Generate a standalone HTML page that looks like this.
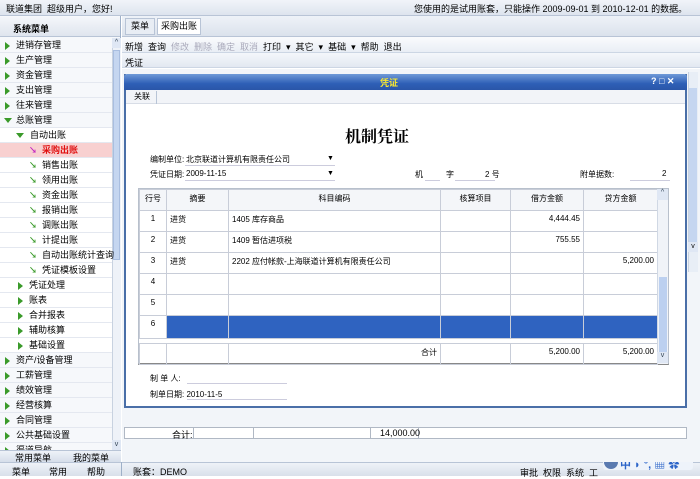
<!DOCTYPE html>
<html><head><meta charset="utf-8"><style>
*{margin:0;padding:0;box-sizing:border-box}
body{width:700px;height:476px;overflow:hidden;background:#fff;font-family:"Liberation Sans","Noto Sans CJK SC",sans-serif;font-size:9px;color:#000;position:relative}
.a{position:absolute;white-space:nowrap}
.mi{position:absolute;left:0;width:112px;height:15px;line-height:15px;border-bottom:1px solid #e4e8f0;background:#f6f8fb}
.tri{position:absolute;width:0;height:0;border-top:4px solid transparent;border-bottom:4px solid transparent;border-left:5px solid #3a9a2a;top:4px}
.dn{position:absolute;width:0;height:0;border-left:4px solid transparent;border-right:4px solid transparent;border-top:5px solid #3a9a2a;top:5px}
.ar{position:absolute;width:7px;height:7px;top:4px;color:#3a9a2a;font-size:8px;line-height:7px;font-weight:bold}
table{border-collapse:collapse;table-layout:fixed}
td{border:1px solid #c8cdd8;font-size:8px;padding:0 3px;height:21px;vertical-align:top;padding-top:3px;overflow:hidden;white-space:nowrap}
</style></head><body>
<div class="a" style="left:0;top:0;width:700px;height:16px;background:linear-gradient(#f1f4f9,#dde4ee);border-bottom:1px solid #b8c4d6"></div>
<div class="a" style="left:6px;top:2px;font-size:9px">联道集团&nbsp; 超级用户，您好!</div>
<div class="a" style="left:414px;top:2px;font-size:9px">您使用的是试用账套，只能操作 2009-09-01 到 2010-12-01 的数据。</div>
<div class="a" style="left:0;top:16px;width:121px;height:446px;background:#f6f8fb;border-right:1px solid #9eb0c8"></div>
<div class="a" style="left:0;top:17px;width:120px;height:20px;background:linear-gradient(#f4f6fa,#dfe5ee);border-bottom:1px solid #b8c4d6"></div>
<div class="a" style="left:13px;top:22px;font-size:9px;font-weight:bold">系统菜单</div>
<div class="a" style="left:112px;top:38px;width:9px;height:412px;background:#eef2f8;border-left:1px solid #c8d2e0"></div>
<div class="a" style="left:112px;top:38px;width:9px;height:10px;background:#dfe7f4;font-size:7px;text-align:center;line-height:10px;color:#345">^</div>
<div class="a" style="left:113px;top:50px;width:7px;height:210px;background:#c5d6f0;border:1px solid #a9bee0"></div>
<div class="a" style="left:112px;top:440px;width:9px;height:10px;background:#dfe7f4;font-size:7px;text-align:center;line-height:10px;color:#345">v</div>
<div id="menu"></div>
<div class="a" style="left:0;top:450px;width:121px;height:12px;background:linear-gradient(#eef2f8,#d6deea);border-top:1px solid #b8c4d6"></div>
<div class="a" style="left:15px;top:451px;font-size:9px">常用菜单</div>
<div class="a" style="left:73px;top:451px;font-size:9px">我的菜单</div>
<div class="a" style="left:0;top:462px;width:700px;height:14px;background:linear-gradient(#eef2f8,#d9e0ea);border-top:1px solid #b8c4d6"></div>
<div class="a" style="left:121px;top:462px;width:1px;height:14px;background:#9eb0c8"></div>
<div class="a" style="left:12px;top:465px">菜单</div>
<div class="a" style="left:49px;top:465px">常用</div>
<div class="a" style="left:87px;top:465px">帮助</div>
<div class="a" style="left:133px;top:465px">账套：DEMO</div>
<div class="a" style="left:520px;top:466px">审批&nbsp;&nbsp;权限&nbsp;&nbsp;系统&nbsp;&nbsp;工</div>
<div class="a" style="left:603px;top:456px;width:90px;height:14px;background:#eef3fa;border-radius:3px"></div>
<div class="a" style="left:604px;top:455px;width:14px;height:14px;border-radius:50%;background:#5a7ab0"></div>
<div class="a" style="left:620px;top:456px;color:#2c64c8;font-size:11px;font-weight:bold">中 ◗ °, ▦ ✿</div>
<div class="a" style="left:122px;top:16px;width:578px;height:21px;background:linear-gradient(#eef2f8,#dbe2ec);border-bottom:1px solid #b8c4d6"></div>
<div class="a" style="left:125px;top:18px;width:30px;height:17px;background:#e8edf4;border:1px solid #b8c4d6;text-align:center;line-height:15px;font-size:9px">菜单</div>
<div class="a" style="left:157px;top:18px;width:44px;height:17px;background:#fff;border:1px solid #b8c4d6;text-align:center;line-height:15px;font-size:9px">采购出账</div>
<div class="a" style="left:122px;top:37px;width:578px;height:16px;background:linear-gradient(#fafbfd,#e9eef5);border-bottom:1px solid #ccd6e4"></div>
<div class="a" style="left:125px;top:40px;font-size:9px">新增&nbsp; 查询&nbsp; <span style="color:#aab">修改&nbsp; 删除&nbsp; 确定&nbsp; 取消</span>&nbsp; 打印 &nbsp;▾&nbsp; 其它 &nbsp;▾&nbsp; 基础 &nbsp;▾&nbsp; 帮助&nbsp; 退出</div>
<div class="a" style="left:122px;top:53px;width:578px;height:15px;background:linear-gradient(#f4f7fb,#e2e8f1);border-bottom:1px solid #ccd6e4"></div>
<div class="a" style="left:125px;top:56px;font-size:9px">凭证</div>
<div class="a" style="left:122px;top:69px;width:578px;height:393px;background:#f2f5f9"></div>
<div class="a" style="left:688px;top:72px;width:10px;height:200px;background:#e8eef6;border-left:1px solid #c8d2e0"></div>
<div class="a" style="left:689px;top:88px;width:8px;height:160px;background:#c5d6f0"></div>
<div class="a" style="left:688px;top:242px;width:10px;height:10px;background:#dfe7f4;font-size:7px;text-align:center;line-height:10px">v</div>
<div class="a" style="left:124px;top:427px;width:563px;height:12px;background:#fff;border:1px solid #b0b8c4"></div>
<div class="a" style="left:172px;top:428px">合计:</div>
<div class="a" style="left:193px;top:427px;width:1px;height:12px;background:#b0b8c4"></div>
<div class="a" style="left:253px;top:427px;width:1px;height:12px;background:#b0b8c4"></div>
<div class="a" style="left:370px;top:427px;width:1px;height:12px;background:#b0b8c4"></div>
<div class="a" style="left:418px;top:427px;width:1px;height:12px;background:#b0b8c4"></div>
<div class="a" style="left:380px;top:428px">14,000.00</div>
<div class="a" style="left:124px;top:74px;width:563px;height:334px;background:#fff;border:2px solid #4a6fa8;border-top:none"></div>
<div class="a" style="left:124px;top:74px;width:563px;height:16px;background:linear-gradient(#6f9ad8,#2e5fb6 60%,#2a56a8);border-radius:3px 3px 0 0"></div>
<div class="a" style="left:380px;top:76px;color:#f8e830;font-weight:bold;font-size:9px">凭证</div>
<div class="a" style="left:651px;top:76px;color:#fff;font-weight:bold;font-size:9px">? □ ✕</div>
<div class="a" style="left:126px;top:90px;width:559px;height:14px;background:#f2f4f8;border-bottom:1px solid #d8dde6"></div>
<div class="a" style="left:128px;top:91px;width:29px;height:13px;border-right:1px solid #b8c4d6;font-size:8px;text-align:center;line-height:12px">关联</div>
<div class="a" style="left:345px;top:124px;font-size:16px;font-weight:bold;font-family:'Liberation Serif','Noto Serif CJK SC',serif">机制凭证</div>
<div class="a" style="left:150px;top:154px;font-size:8px">编制单位:</div>
<div class="a" style="left:186px;top:154px;font-size:8px">北京联道计算机有限责任公司</div>
<div class="a" style="left:185px;top:165px;width:150px;height:1px;background:#ccd"></div>
<div class="a" style="left:327px;top:155px;font-size:7px">▼</div>
<div class="a" style="left:150px;top:169px;font-size:8px">凭证日期:</div>
<div class="a" style="left:186px;top:169px;font-size:8px">2009-11-15</div>
<div class="a" style="left:185px;top:180px;width:150px;height:1px;background:#ccd"></div>
<div class="a" style="left:327px;top:170px;font-size:7px">▼</div>
<div class="a" style="left:415px;top:169px;font-size:8px">机</div>
<div class="a" style="left:446px;top:169px;font-size:8px">字</div>
<div class="a" style="left:485px;top:169px;font-size:8px">2 号</div>
<div class="a" style="left:425px;top:180px;width:15px;height:1px;background:#ccd"></div>
<div class="a" style="left:455px;top:180px;width:40px;height:1px;background:#ccd"></div>
<div class="a" style="left:580px;top:169px;font-size:8px">附单据数:</div>
<div class="a" style="left:662px;top:169px;font-size:8px">2</div>
<div class="a" style="left:630px;top:180px;width:40px;height:1px;background:#ccd"></div>
<div class="a" style="left:138px;top:188px;width:531px;height:177px;border:1px solid #b8c0cc;border-bottom:2px solid #888;background:#fff"></div>
<table class="a" style="left:139px;top:189px;width:518px">
<colgroup><col style="width:27px"><col style="width:62px"><col style="width:212px"><col style="width:70px"><col style="width:73px"><col style="width:74px"></colgroup>
<tr style="background:#f4f6f9"><td style="height:18px;text-align:center">行号</td><td style="text-align:center">摘要</td><td style="text-align:center">科目编码</td><td style="text-align:center">核算项目</td><td style="text-align:center">借方金额</td><td style="text-align:center">贷方金额</td></tr>
<tr><td style="text-align:center">1</td><td>进货</td><td>1405 库存商品</td><td></td><td style="text-align:right">4,444.45</td><td></td></tr>
<tr><td style="text-align:center">2</td><td>进货</td><td>1409 暂估进项税</td><td></td><td style="text-align:right">755.55</td><td></td></tr>
<tr><td style="text-align:center">3</td><td>进货</td><td>2202 应付帐款-上海联道计算机有限责任公司</td><td></td><td></td><td style="text-align:right">5,200.00</td></tr>
<tr><td style="text-align:center">4</td><td></td><td></td><td></td><td></td><td></td></tr>
<tr><td style="text-align:center">5</td><td></td><td></td><td></td><td></td><td></td></tr>
<tr><td style="text-align:center;height:23px">6</td><td style="background:#2f63c0"></td><td style="background:#2f63c0"></td><td style="background:#2f63c0"></td><td style="background:#2f63c0"></td><td style="background:#2f63c0"></td></tr>
</table>
<table class="a" style="left:139px;top:343px;width:518px">
<colgroup><col style="width:27px"><col style="width:62px"><col style="width:212px"><col style="width:70px"><col style="width:73px"><col style="width:74px"></colgroup>
<tr><td></td><td></td><td style="text-align:right">合计</td><td></td><td style="text-align:right">5,200.00</td><td style="text-align:right">5,200.00</td></tr>
</table>
<div class="a" style="left:657px;top:189px;width:11px;height:175px;background:#f0f3f8;border-left:1px solid #d0d8e4"></div>
<div class="a" style="left:657px;top:189px;width:11px;height:11px;font-size:7px;text-align:center;color:#345;background:#dfe7f4">^</div>
<div class="a" style="left:659px;top:277px;width:8px;height:75px;background:#bcd0f0"></div>
<div class="a" style="left:657px;top:352px;width:11px;height:11px;font-size:7px;text-align:center;color:#345;background:#dfe7f4">v</div>
<div class="a" style="left:150px;top:373px;font-size:8px">制 单 人:</div>
<div class="a" style="left:187px;top:383px;width:100px;height:1px;background:#ccd"></div>
<div class="a" style="left:150px;top:389px;font-size:8px">制单日期: 2010-11-5</div>
<div class="a" style="left:187px;top:399px;width:100px;height:1px;background:#ccd"></div>
<script>
var items=[["进销存管理",0],["生产管理",0],["资金管理",0],["支出管理",0],["往来管理",0],["总账管理",1],["自动出账",2],["采购出账",3],["销售出账",4],["领用出账",4],["资金出账",4],["报销出账",4],["调账出账",4],["计提出账",4],["自动出账统计查询",4],["凭证模板设置",4],["凭证处理",5],["账表",5],["合并报表",5],["辅助核算",5],["基础设置",5],["资产/设备管理",0],["工薪管理",0],["绩效管理",0],["经营核算",0],["合同管理",0],["公共基础设置",0],["渠道导航",0]];
var h="";items.forEach(function(it,i){var t=38+i*15,k=it[1];var st="top:"+t+"px;";if(k==3)st+="background:#f8d0d0;";if(k>=2&&k!=3)st+="background:#fff;";if(i==27)st+="height:12px;overflow:hidden;";
var ic="",tx=16;
if(k==0){ic='<div class="tri" style="left:5px"></div>';}
else if(k==1){ic='<div class="dn" style="left:4px"></div>';}
else if(k==2){ic='<div class="dn" style="left:16px"></div>';tx=30;}
else if(k==3||k==4){ic='<div class="ar" style="left:29px;color:'+(k==3?'#c020c0':'#3a9a2a')+'">↘</div>';tx=42;}
else {ic='<div class="tri" style="left:18px"></div>';tx=29;}
h+='<div class="mi" style="'+st+'">'+ic+'<span class="a" style="left:'+tx+'px;top:0;font-size:9px;'+(k==3?'color:#e01010;font-weight:bold':'')+'">'+it[0]+'</span></div>';});
document.getElementById("menu").innerHTML=h;
</script>
</body></html>
